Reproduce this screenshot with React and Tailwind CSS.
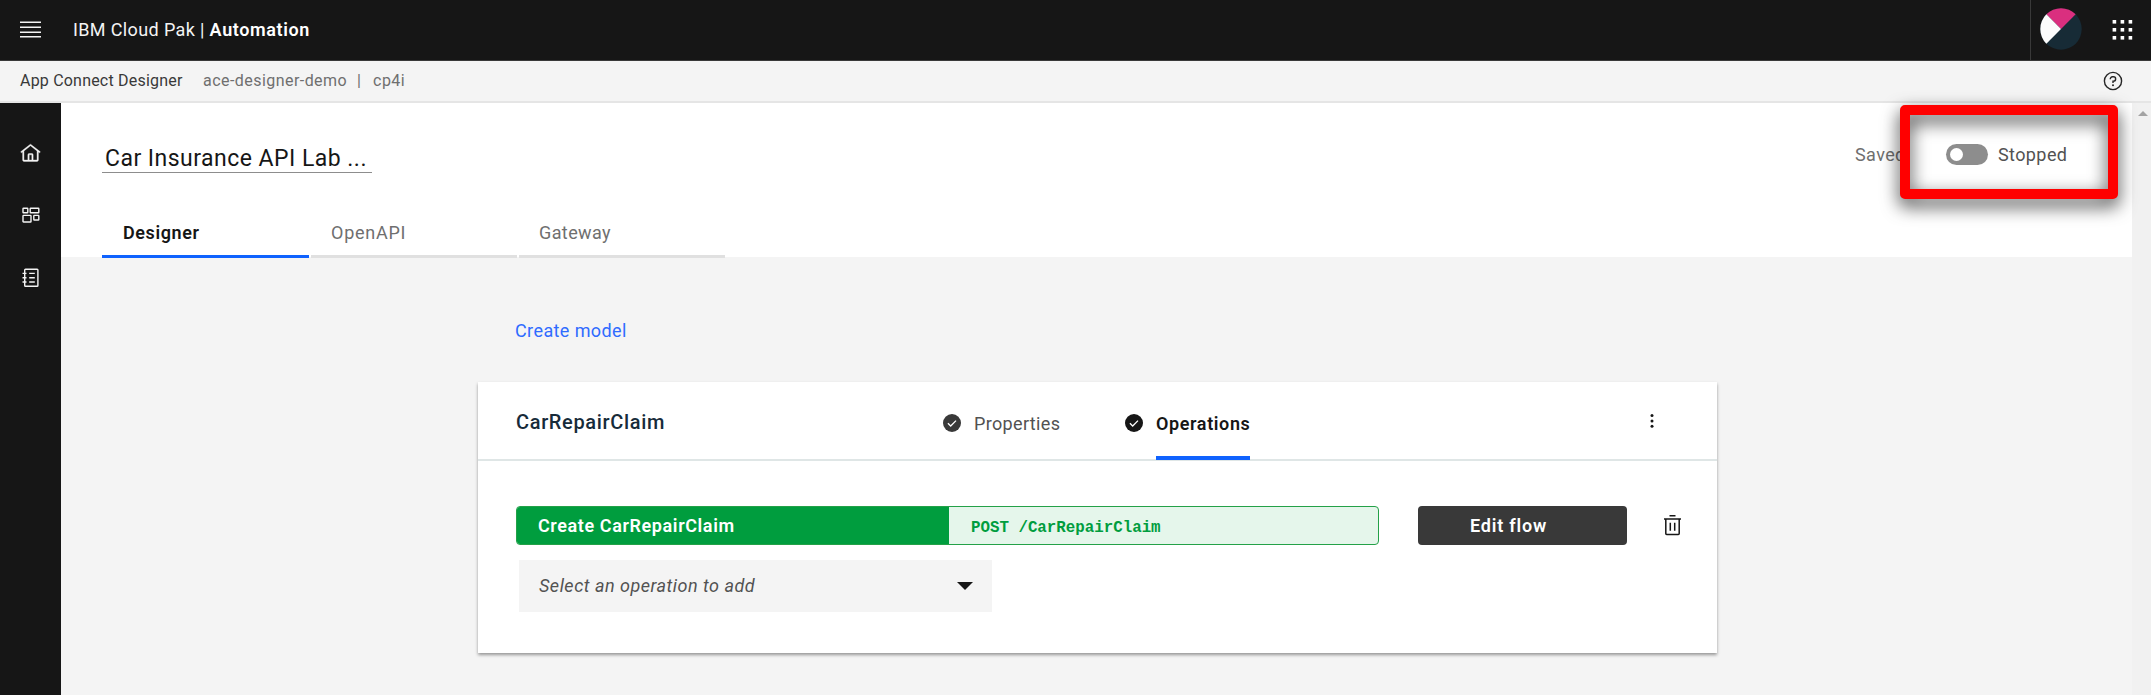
const dots = [0, 8, 16];

function HomeIcon() {
  return (
    <svg className="h-[21px] w-[21px]" viewBox="0 0 32 32" fill="#f4f4f4" stroke="#f4f4f4" strokeWidth="0.6">
      <path d="M16.61 2.21a1 1 0 0 0-1.24 0L1 13.42 2.24 15 4 13.62V26a2 2 0 0 0 2 2h20a2 2 0 0 0 2-2V13.63L29.76 15 31 13.43ZM18 26h-4v-8h4Zm2 0v-8a2 2 0 0 0-2-2h-4a2 2 0 0 0-2 2v8H6V12.06l10-7.79 10 7.8V26Z" />
    </svg>
  );
}

function CatalogIcon() {
  return (
    <svg className="h-[17px] w-[18px]" viewBox="0 0 18 17" fill="none" stroke="#f4f4f4" strokeWidth="1.4">
      <rect x="1" y="1.2" width="4.8" height="4.6" rx="0.5" />
      <rect x="8.2" y="1.2" width="8.6" height="4.6" rx="0.5" />
      <rect x="1" y="8.4" width="8" height="6.6" rx="0.5" />
      <rect x="11.8" y="8.4" width="5" height="4.6" rx="0.5" />
    </svg>
  );
}

function NotebookIcon() {
  return (
    <svg className="h-[20px] w-[18px]" viewBox="0 0 18 20" fill="none" stroke="#f4f4f4" strokeWidth="1.4">
      <rect x="2.7" y="1.2" width="13.2" height="17" rx="0.8" />
      <path d="M0.5 5.4h4M0.5 9.7h4M0.5 14h4M7.2 5.4h5.6M7.2 9.7h5.6M7.2 14h5.6" />
    </svg>
  );
}

function CheckIcon({ color }) {
  return (
    <svg className="h-[18px] w-[18px]" viewBox="0 0 18 18">
      <circle cx="9" cy="9" r="9" fill={color} />
      <path d="M4.9 9.2l2.8 2.8 5.3-5.4" fill="none" stroke="#fff" strokeWidth="1.3" />
    </svg>
  );
}

function Header() {
  return (
    <header className="flex h-[61px] items-center border-b border-[#393939] bg-[#161616] text-white">
      <svg className="ml-5 h-[18px] w-[21px]" viewBox="0 0 21 18" fill="#f4f4f4">
        <path d="M0 .6h21v1.5H0zM0 5.4h21v1.5H0zM0 10.4h21v1.5H0zM0 14.9h21v1.5H0z" />
      </svg>
      <div className="ml-[32px] flex whitespace-pre text-[18px] leading-6">
        <span className="tracking-[0.37px] text-[#f4f4f4]">IBM Cloud Pak | </span>
        <span className="font-semibold tracking-[0.6px]">Automation</span>
      </div>
      <div className="ml-auto flex h-full items-center border-l border-[#393939]">
        <svg className="mb-[2px] ml-[9px] h-[42px] w-[42px]" viewBox="0 0 42 42">
          <circle cx="21" cy="21" r="20.7" fill="#172b36" />
          <path d="M21 21 6.36 6.36A20.7 20.7 0 0 1 35.64 6.36Z" fill="#da2f7f" />
          <path d="M21 21 6.36 35.64A20.7 20.7 0 0 1 6.36 6.36Z" fill="#fcfcfc" />
        </svg>
        <svg className="ml-[30px] mr-[18px] h-[21px] w-[21px]" viewBox="0 0 21 21" fill="#fff">
          {dots.map((y) => dots.map((x) => <rect key={x + "-" + y} x={x + 0.6} y={y} width="3.6" height="3.6" />))}
        </svg>
      </div>
    </header>
  );
}

function SubHeader() {
  return (
    <div className="flex h-[42px] items-center border-b-2 border-[#e5e5e5] bg-[#f4f4f4] pl-5 text-[16px] leading-5 text-[#6f6f6f]">
      <span className="w-[183px] tracking-[0.2px] text-[#393939]">App Connect Designer</span>
      <span className="w-[154px] tracking-[0.45px]">ace-designer-demo</span>
      <span className="w-4">|</span>
      <span className="tracking-[0.5px]">cp4i</span>
      <svg className="ml-auto mr-[28px] h-[20px] w-[20px]" viewBox="0 0 20 20" fill="none" stroke="#262626" strokeWidth="1.4">
        <circle cx="10" cy="10" r="8.6" />
        <path d="M7.3 8.2V7.9A2.1 2.1 0 0 1 9.4 5.8h1.1a2.1 2.1 0 0 1 0 4.3H10v1.8" />
        <circle cx="10" cy="14.3" r="1" fill="#262626" stroke="none" />
      </svg>
    </div>
  );
}

function FlowHeader() {
  return (
    <section className="flex h-[154px] flex-col bg-white pl-[41px]">
      <div className="flex h-[104px] shrink-0 justify-between">
        <div className="mt-[36px] h-[34px] w-[270px] border-b border-[#8d8d8d] pl-[3px] pt-[2px] text-[23px] leading-9 tracking-[0.47px] text-[#161616]">
          Car Insurance API Lab ...
        </div>
        <div className="relative mr-[14px] mt-[2px] flex h-[94px] w-[263px] items-center">
          <span className="pt-[4px] text-[18px] tracking-[0.4px] text-[#6f6f6f]">Saved</span>
          <div className="absolute right-0 top-0 h-[94px] w-[218px] rounded-[5px] border-10 border-[#ff0000] drop-shadow-[0_7px_9px_rgba(0,0,0,0.8)]" />
          <div className="absolute left-[91px] top-[39px] flex items-center">
            <span className="flex h-[21px] w-[42px] items-center rounded-full bg-[#8d8d8d] pl-[4px]">
              <span className="h-[13px] w-[13px] rounded-full bg-white" />
            </span>
            <span className="ml-[10px] text-[18px] leading-5 tracking-[0.4px] text-[#525252]">Stopped</span>
          </div>
        </div>
      </div>
      <nav className="flex h-[51px] shrink-0 gap-[2px] text-[18px] text-[#6f6f6f]">
        <a className="flex w-[207px] items-center border-b-[3px] border-[#0f62fe] pl-[21px] pt-[2px] font-semibold tracking-[0.6px] text-[#161616]">Designer</a>
        <a className="flex w-[206px] items-center border-b-[3px] border-[#e0e0e0] pl-[20px] pt-[2px] tracking-[0.75px]">OpenAPI</a>
        <a className="flex w-[206px] items-center border-b-[3px] border-[#e0e0e0] pl-[20px] pt-[2px] tracking-[0.4px]">Gateway</a>
      </nav>
    </section>
  );
}

function ModelCard() {
  return (
    <section className="mt-[37px] h-[271px] w-[1239px] bg-white shadow-[0_2px_3px_rgba(0,0,0,0.38)]">
      <div className="flex h-[79px] items-start border-b-2 border-[#dfe6e6] pl-[38px]">
        <h2 className="mt-[25px] w-[427px] text-[20px] font-medium leading-[30px] tracking-[0.65px] text-[#172b3a]">CarRepairClaim</h2>
        <div className="flex h-[78px] items-center pt-[4px]">
          <CheckIcon color="#393939" />
          <span className="ml-[13px] w-[151px] text-[18px] tracking-[0.35px] text-[#525252]">Properties</span>
          <CheckIcon color="#161616" />
        </div>
        <span className="ml-[13px] h-[78px] border-b-4 border-[#0f62fe] pt-[28px] text-[18px] font-semibold leading-7 tracking-[0.62px] text-[#161616]">Operations</span>
        <svg className="ml-auto mr-[62px] mt-[30px] h-[18px] w-[6px]" viewBox="0 0 6 18" fill="#161616">
          <circle cx="3" cy="3.5" r="1.5" />
          <circle cx="3" cy="8.9" r="1.5" />
          <circle cx="3" cy="14.2" r="1.5" />
        </svg>
      </div>
      <div className="mt-[45px] flex h-[39px] items-center pl-[38px]">
        <div className="flex h-full w-[863px] overflow-hidden rounded-[4px] border border-[#24a148] bg-[#e5f6eb]">
          <div className="flex w-[432px] items-center bg-[#009d3e] pl-[21px] text-[18px] font-semibold tracking-[0.6px] text-white">Create CarRepairClaim</div>
          <div className="flex items-center pl-[22px] pt-[6px] font-['Liberation_Mono',monospace] text-[15.8px] font-bold text-[#009d3e]">POST /CarRepairClaim</div>
        </div>
        <button className="ml-[39px] flex h-full w-[209px] items-center rounded-[4px] bg-[#393939] pl-[52px] text-[18px] font-semibold tracking-[0.8px] text-white">Edit flow</button>
        <svg className="ml-[35px] h-[23px] w-[21px]" viewBox="0 0 21 23" fill="none" stroke="#161616" strokeWidth="1.5">
          <path d="M7.5 1.8h6M2 5h17" />
          <path d="M3.8 5v14.6a.9.9 0 0 0 .9.9h11.6a.9.9 0 0 0 .9-.9V5M8.3 8.8v8M12.7 8.8v8" />
        </svg>
      </div>
      <div className="ml-[41px] mt-[15px] flex h-[52px] w-[473px] items-center justify-between bg-[#f4f4f4] pl-[20px] pr-[19px]">
        <span className="pb-[2px] text-[18px] italic tracking-[0.5px] text-[#525252]">Select an operation to add</span>
        <svg className="mb-[1px] h-[8px] w-[16px]" viewBox="0 0 16 8" fill="#161616">
          <path d="M0 0h16L8 8z" />
        </svg>
      </div>
    </section>
  );
}

export default function App() {
  return (
    <div className="flex h-[695px] w-[2151px] flex-col overflow-hidden bg-[#f4f4f4] font-[Roboto,sans-serif]">
      <Header />
      <SubHeader />
      <div className="flex flex-1">
        <aside className="flex w-[61px] flex-col items-center bg-[#161616]">
          <div className="mt-[40px] flex h-[21px]"><HomeIcon /></div>
          <div className="mt-[43px] flex h-[17px]"><CatalogIcon /></div>
          <div className="mt-[44px] flex h-[20px]"><NotebookIcon /></div>
        </aside>
        <main className="flex w-[2071px] flex-col">
          <FlowHeader />
          <div className="pl-[416px]">
            <a className="mt-[60px] block pl-[38px] text-[18px] leading-7 tracking-[0.4px] text-[#2f6bff]">Create model</a>
            <div className="pl-px">
              <ModelCard />
            </div>
          </div>
        </main>
        <div className="flex w-[19px] justify-center bg-[#f1f1f1] pt-[8px]">
          <svg className="ml-[3px] h-[5px] w-[10px]" viewBox="0 0 10 5" fill="#a3a3a3">
            <path d="M5 0l5 5H0z" />
          </svg>
        </div>
      </div>
    </div>
  );
}
